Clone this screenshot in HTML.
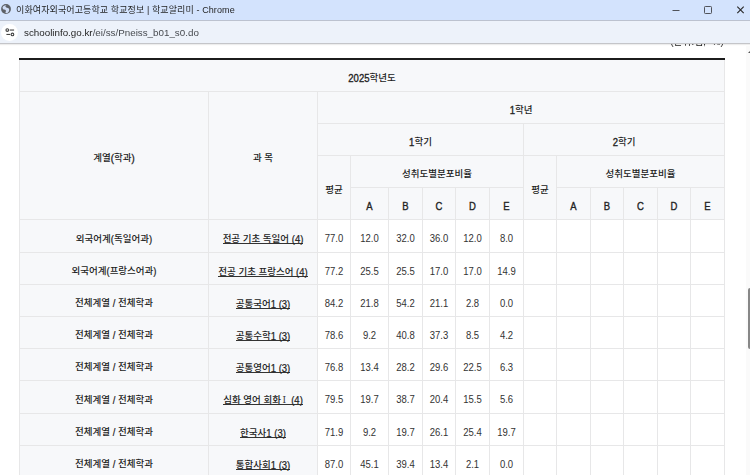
<!DOCTYPE html>
<html lang="ko"><head><meta charset="utf-8"><title>이화여자외국어고등학교 학교정보 | 학교알리미</title>
<style>
html,body{margin:0;padding:0;}
body{width:750px;height:475px;overflow:hidden;background:#fff;position:relative;font-family:"Liberation Sans","Noto Sans CJK KR",sans-serif;color:#222;}
#titlebar{position:absolute;left:0;top:0;width:750px;height:20px;background:#d3e3fd;z-index:3;}
#title{position:absolute;left:16px;top:0;height:20px;line-height:20px;font-size:9px;color:#1f1f1f;white-space:nowrap;letter-spacing:0.1px;}
#globe{position:absolute;left:1.2px;top:4px;width:10px;height:10px;}
#wc{position:absolute;right:0;top:0;width:80px;height:20px;}
#addr{position:absolute;left:0;top:20px;width:750px;height:22px;background:#edf2fa;border-bottom:1px solid #c4c5c9;border-top:1px solid #bcc2cf;box-shadow:0 1px 1px rgba(0,0,0,0.07);box-sizing:content-box;z-index:2;}
#tune{position:absolute;left:1px;top:2.7px;width:17px;height:17px;border-radius:50%;background:#fff;}
#url{position:absolute;left:24px;top:-0.5px;height:24px;line-height:24px;font-size:9.8px;color:#1f1f1f;white-space:nowrap;}
#url span{color:#474a4f;}
#unit{position:absolute;left:650px;top:35px;transform:translateY(-0.4px);will-change:transform;width:73.700px;text-align:right;font-size:9.5px;line-height:13px;color:#222;white-space:nowrap;z-index:1;}
#tbl{position:absolute;left:19px;top:58px;border-collapse:collapse;table-layout:fixed;width:706px;font-size:9.5px;border-top:2px solid #1c1c1c;}
#tbl th,#tbl td{border:1px solid #e7e7e8;padding:3px 0 0 0;height:28px;text-align:center;vertical-align:middle;white-space:nowrap;overflow:hidden;}
#tbl th{background:#f7f8fa;font-weight:500;color:#222;font-family:"Liberation Sans","Noto Sans CJK KR",sans-serif;}
#tbl td{color:#333;font-weight:400;}
#tbl td i{display:inline-block;font-style:normal;transform:translateY(1px) scaleY(1.17);transform-origin:50% 58%;}
#tbl th i{display:inline-block;font-style:normal;transform:translateY(1px) scaleY(1.17);transform-origin:50% 58%;-webkit-text-stroke:0.3px #222;}
#tbl em{font-style:normal;font-weight:400;font-family:"DejaVu Serif","Noto Serif CJK SC",serif;font-size:9px;color:#333;padding:0 2.5px 0 1.6px;}
#tbl td.k i{-webkit-text-stroke:0.2px #222;}
#tbl u{display:inline-block;position:relative;top:1px;text-decoration:none;height:9px;line-height:9px;border-bottom:1px solid #333;}
#tbl td.k{font-weight:500;color:#222;background:#f7f8fa;}
#tbl tr:first-child th{border-top:none;}
#sb{position:absolute;left:746px;top:46px;width:4px;height:430px;background:#fafafa;}
#thumb{position:absolute;left:748px;top:288px;width:6px;height:61px;background:#878787;border-radius:2px;}
#arrow{position:absolute;left:748px;top:50px;width:0;height:0;border-left:3px solid transparent;border-right:3px solid transparent;border-bottom:3px solid #555;}
</style></head><body>
<div id="titlebar">
<svg id="globe" viewBox="0 0 10 10"><circle cx="5" cy="5" r="4.9" fill="#5d6066"/><path d="M1.500 3.600 C2 1.900 3.800 1.100 5.400 1.200 L4.300 2.500 L5.300 3.600 L7.600 4.300 C8.500 5.400 8.400 6.900 7.500 8.100 C6.900 8.900 6 9.300 5 9.300 L4.300 8.300 L5.100 7 L4.200 5.800 L2 5.300 Z" fill="#cfdcf5"/></svg>
<div id="title">이화여자외국어고등학교 학교정보 | 학교알리미 - Chrome</div>
<svg id="wc" viewBox="0 0 80 20"><path d="M2.5 10.5 H9.5" stroke="#50535a" stroke-width="1" fill="none"/><rect x="34.500" y="6.500" width="7" height="7" rx="0.8" fill="none" stroke="#50535a" stroke-width="1"/><path d="M67.300 6.700 L73.700 13.100 M73.700 6.700 L67.300 13.100" stroke="#2a2a2a" stroke-width="1.150" fill="none"/></svg>
</div>
<div id="addr"><div id="tune"><svg viewBox="0 0 15 15" width="16.5" height="16.5" style="position:absolute;left:0.5px;top:0.1px"><g stroke="#444" stroke-width="1" fill="none"><path d="M7 5.500 H11"/><circle cx="4.800" cy="5.500" r="1.200"/><path d="M4 9.500 H7.500"/><circle cx="9.500" cy="9.500" r="1.200"/></g></svg></div>
<div id="url">schoolinfo.go.kr<span>/ei/ss/Pneiss_b01_s0.do</span></div></div>
<div id="unit">(단위<span style="margin:0 -2.3px"> : </span>점,<span style="margin-left:3.6px"> </span>%)</div>
<table id="tbl"><colgroup><col style="width:189px"><col style="width:109px"><col style="width:33px"><col style="width:38px"><col style="width:34px"><col style="width:33px"><col style="width:34px"><col style="width:34px"><col style="width:33px"><col style="width:34px"><col style="width:33px"><col style="width:34px"><col style="width:33px"><col style="width:34px"></colgroup>
<thead>
<tr><th colspan="14"><i>2025</i>학년도</th></tr>
<tr><th rowspan="4">계열<i>(</i>학과<i>)</i></th><th rowspan="4">과 목</th><th colspan="12"><i>1</i>학년</th></tr>
<tr><th colspan="6"><i>1</i>학기</th><th colspan="6"><i>2</i>학기</th></tr>
<tr><th rowspan="2">평균</th><th colspan="5">성취도별분포비율</th><th rowspan="2">평균</th><th colspan="5">성취도별분포비율</th></tr>
<tr><th><i>A</i></th><th><i>B</i></th><th><i>C</i></th><th><i>D</i></th><th><i>E</i></th><th><i>A</i></th><th><i>B</i></th><th><i>C</i></th><th><i>D</i></th><th><i>E</i></th></tr>
</thead>
<tbody>
<tr style="height:33px"><td class="k">외국어계<i>(</i>독일어과<i>)</i></td><td class="k"><u>전공 기초 독일어 <i>(4)</i></u></td><td><i>77.0</i></td><td><i>12.0</i></td><td><i>32.0</i></td><td><i>36.0</i></td><td><i>12.0</i></td><td><i>8.0</i></td><td></td><td></td><td></td><td></td><td></td><td></td></tr>
<tr style="height:32px"><td class="k">외국어계<i>(</i>프랑스어과<i>)</i></td><td class="k"><u>전공 기초 프랑스어 <i>(4)</i></u></td><td><i>77.2</i></td><td><i>25.5</i></td><td><i>25.5</i></td><td><i>17.0</i></td><td><i>17.0</i></td><td><i>14.9</i></td><td></td><td></td><td></td><td></td><td></td><td></td></tr>
<tr style="height:32px"><td class="k">전체계열 <i>/</i> 전체학과</td><td class="k"><u>공통국어<i>1 (3)</i></u></td><td><i>84.2</i></td><td><i>21.8</i></td><td><i>54.2</i></td><td><i>21.1</i></td><td><i>2.8</i></td><td><i>0.0</i></td><td></td><td></td><td></td><td></td><td></td><td></td></tr>
<tr style="height:32px"><td class="k">전체계열 <i>/</i> 전체학과</td><td class="k"><u>공통수학<i>1 (3)</i></u></td><td><i>78.6</i></td><td><i>9.2</i></td><td><i>40.8</i></td><td><i>37.3</i></td><td><i>8.5</i></td><td><i>4.2</i></td><td></td><td></td><td></td><td></td><td></td><td></td></tr>
<tr style="height:32px"><td class="k">전체계열 <i>/</i> 전체학과</td><td class="k"><u>공통영어<i>1 (3)</i></u></td><td><i>76.8</i></td><td><i>13.4</i></td><td><i>28.2</i></td><td><i>29.6</i></td><td><i>22.5</i></td><td><i>6.3</i></td><td></td><td></td><td></td><td></td><td></td><td></td></tr>
<tr style="height:33px"><td class="k">전체계열 <i>/</i> 전체학과</td><td class="k"><u>심화 영어 회화<em>Ⅰ</em> <i>(4)</i></u></td><td><i>79.5</i></td><td><i>19.7</i></td><td><i>38.7</i></td><td><i>20.4</i></td><td><i>15.5</i></td><td><i>5.6</i></td><td></td><td></td><td></td><td></td><td></td><td></td></tr>
<tr style="height:32px"><td class="k">전체계열 <i>/</i> 전체학과</td><td class="k"><u>한국사<i>1 (3)</i></u></td><td><i>71.9</i></td><td><i>9.2</i></td><td><i>19.7</i></td><td><i>26.1</i></td><td><i>25.4</i></td><td><i>19.7</i></td><td></td><td></td><td></td><td></td><td></td><td></td></tr>
<tr style="height:32px"><td class="k">전체계열 <i>/</i> 전체학과</td><td class="k"><u>통합사회<i>1 (3)</i></u></td><td><i>87.0</i></td><td><i>45.1</i></td><td><i>39.4</i></td><td><i>13.4</i></td><td><i>2.1</i></td><td><i>0.0</i></td><td></td><td></td><td></td><td></td><td></td><td></td></tr>
</tbody></table>
<div id="sb"></div><div id="thumb"></div><div id="arrow"></div>
</body></html>
